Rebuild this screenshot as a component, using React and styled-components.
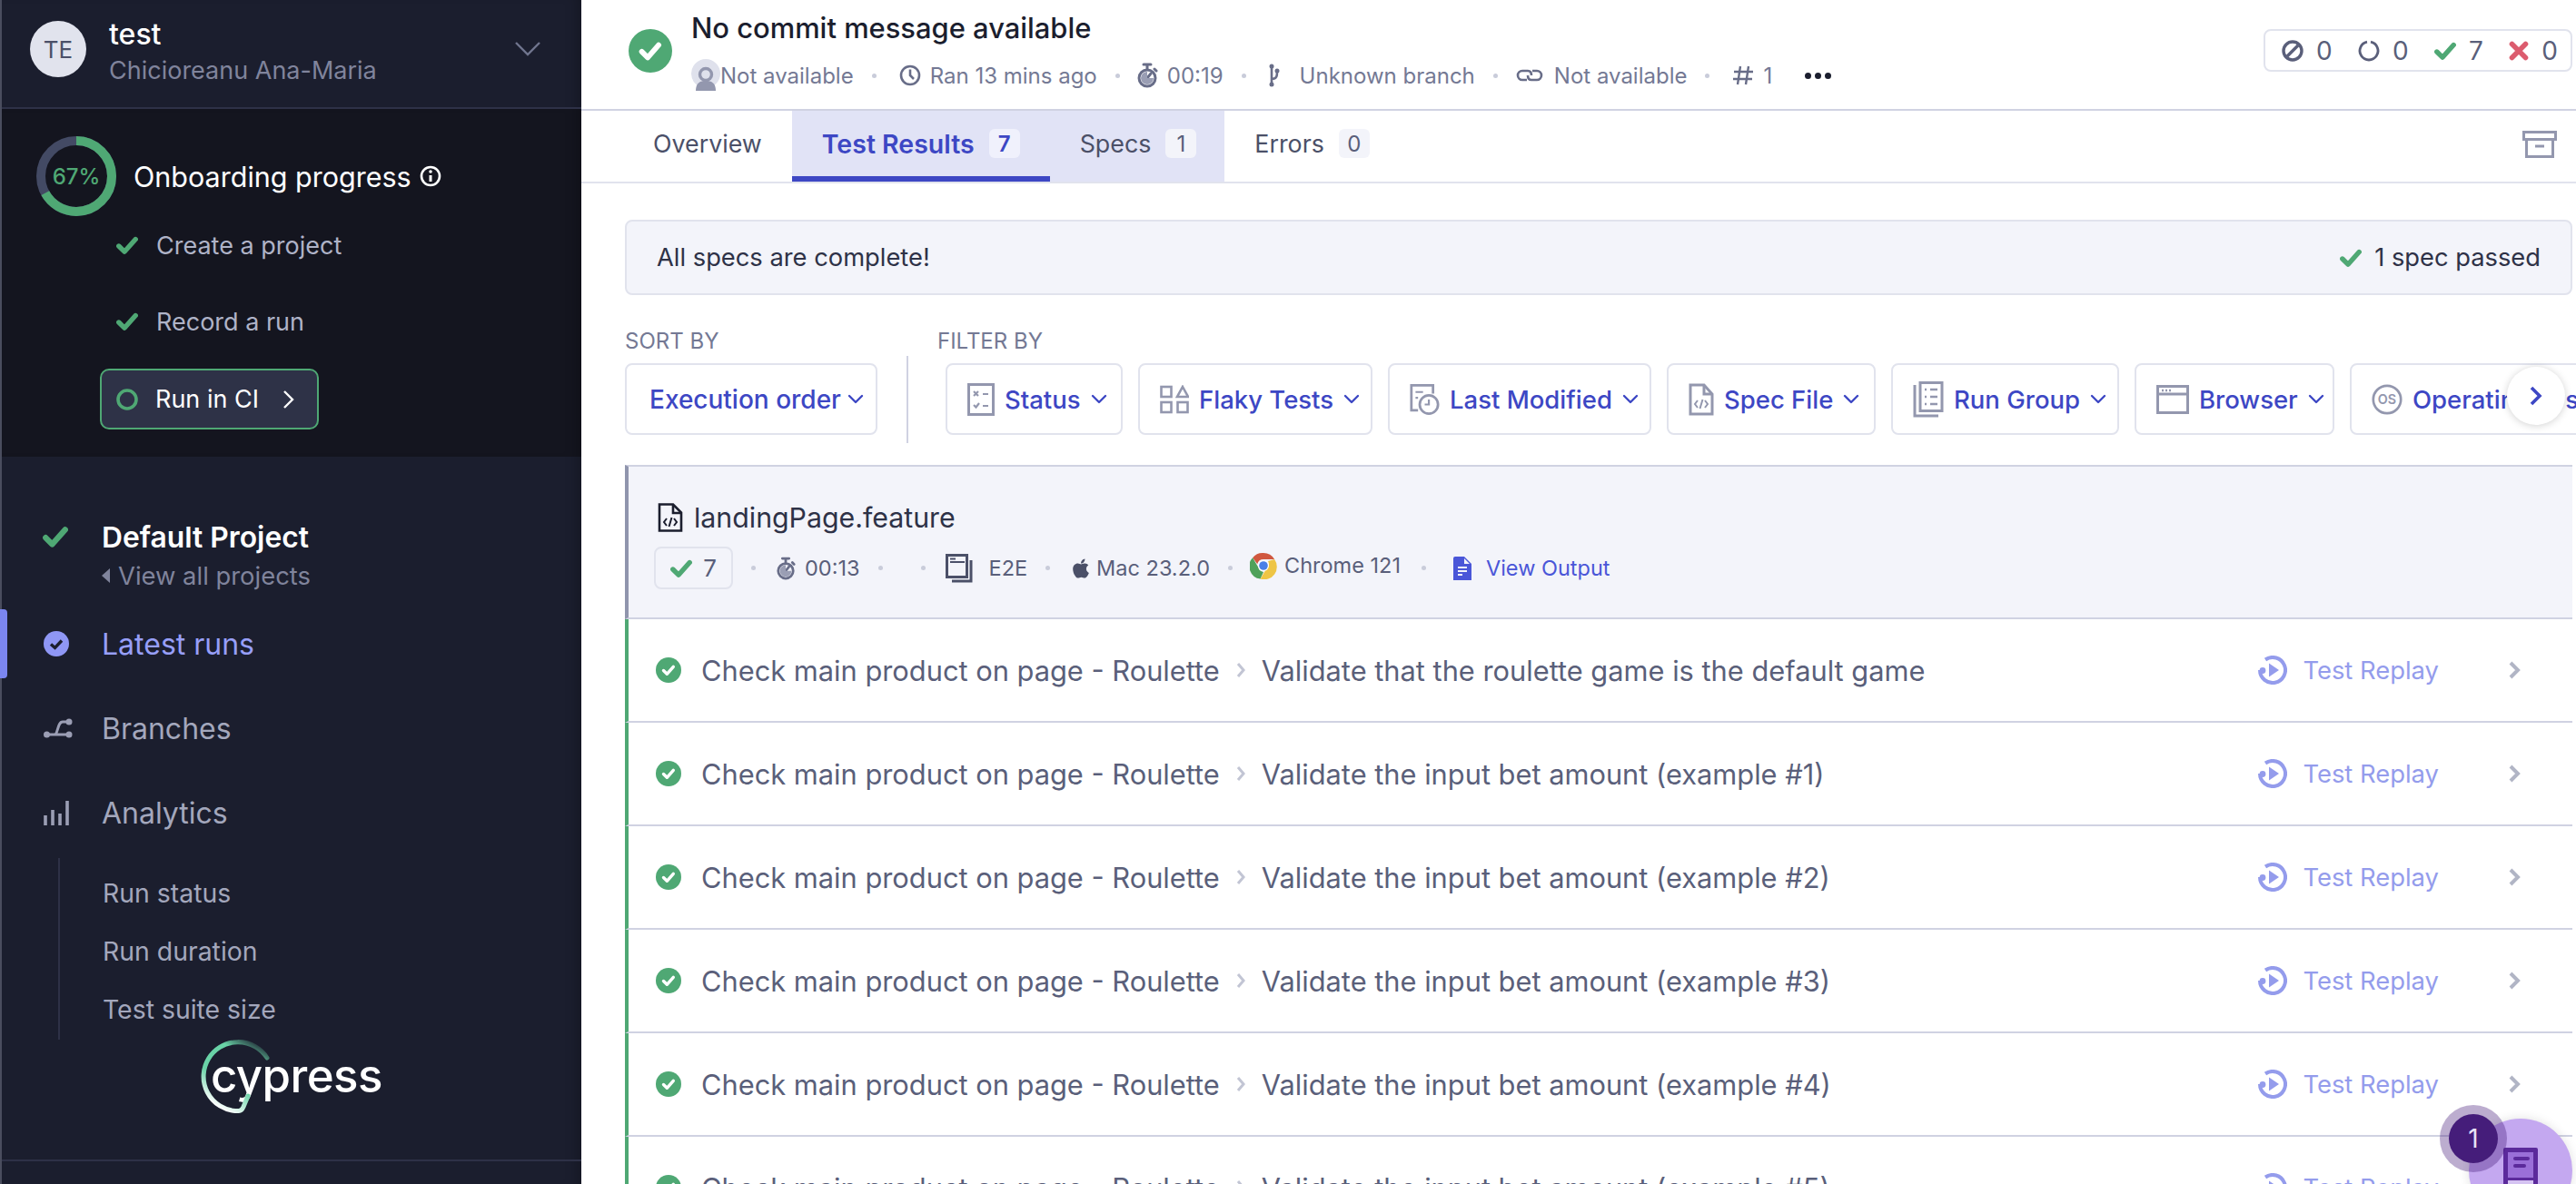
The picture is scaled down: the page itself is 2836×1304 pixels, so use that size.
import React from 'react';
import styled, { createGlobalStyle } from 'styled-components';
import { FaApple } from 'react-icons/fa';

const GlobalStyle = createGlobalStyle`
  html, body {
    margin: 0;
    padding: 0;
    background: #fff;
    overflow: hidden;
  }
  * {
    box-sizing: border-box;
  }
`;

const GREEN = '#4fa874';
const INDIGO = '#3d47c4';

function Check({ size = 24, color = GREEN }) {
  return (
    <svg width={size} height={size} viewBox="0 0 24 24" fill="none">
      <path d="M2.8 13l6.2 6.2L21.2 5.5" stroke={color} strokeWidth="5.4" strokeLinejoin="round" strokeLinecap="round" />
    </svg>
  );
}

function ChevronDown() {
  return (
    <svg width="18" height="12" viewBox="0 0 18 12" fill="none">
      <path d="M2 2l7 7 7-7" stroke={INDIGO} strokeWidth="2.4" strokeLinecap="round" strokeLinejoin="round" />
    </svg>
  );
}

function StatusDot({ size = 28 }) {
  return (
    <svg width={size} height={size} viewBox="0 0 28 28">
      <circle cx="14" cy="14" r="14" fill={GREEN} />
      <path d="M8.5 14.5l3.8 3.8 7-8" stroke="#fff" strokeWidth="3.4" fill="none" strokeLinecap="round" strokeLinejoin="round" />
    </svg>
  );
}

function Stopwatch({ size = 24 }) {
  return (
    <svg width={size} height={size + 4} viewBox="0 0 24 28" fill="none">
      <path d="M8 2h8M12 2v5M20 7l2 2" stroke="#686d88" strokeWidth="3" strokeLinecap="round" />
      <circle cx="12" cy="17" r="9" stroke="#686d88" strokeWidth="3" />
      <path d="M12 17l4-5" stroke="#686d88" strokeWidth="3" strokeLinecap="round" />
      <path d="M12 10a7 7 0 1 0 7 7h-7z" fill="#9a9eb4" />
    </svg>
  );
}

function Replay() {
  return (
    <svg width="32" height="32" viewBox="0 0 32 32" fill="none">
      <path d="M8 4.5A14 14 0 1 1 2 16" stroke="#949cec" strokeWidth="4" />
      <circle cx="5" cy="16.5" r="3.4" fill="#949cec" />
      <path d="M12 8.5l11 7.5-11 7.5z" fill="#949cec" />
    </svg>
  );
}

const stroke = { stroke: '#9397ae', strokeWidth: 3, fill: 'none' };

const filterIcons = {
  status: (
    <svg width="30" height="36" viewBox="0 0 30 36">
      <rect x="1.5" y="1.5" width="27" height="33" {...stroke} />
      <path d="M7 9l5 5M12 9l-5 5M17 12h6M7 24l2.5 2.5L13 22M17 25h6" {...stroke} strokeWidth="2.2" />
    </svg>
  ),
  flaky: (
    <svg width="32" height="32" viewBox="0 0 32 32">
      <rect x="1.5" y="2" width="11" height="11" {...stroke} strokeWidth="2.6" />
      <path d="M25 2l6 11H19z" {...stroke} strokeWidth="2.6" />
      <rect x="1.5" y="19" width="11" height="11" {...stroke} strokeWidth="2.6" />
      <rect x="19.5" y="19" width="11" height="11" {...stroke} strokeWidth="2.6" />
    </svg>
  ),
  modified: (
    <svg width="33" height="38" viewBox="0 0 36 38">
      <path d="M10 32H2V2h26v10" {...stroke} />
      <path d="M7 10h9M7 17h3" {...stroke} strokeWidth="2.4" />
      <circle cx="23" cy="25" r="11" {...stroke} />
      <path d="M23 19v6h-5" {...stroke} strokeWidth="2.4" />
    </svg>
  ),
  spec: (
    <svg width="28" height="36" viewBox="0 0 28 36">
      <path d="M2 2h15l9 10v22H2z" {...stroke} />
      <path d="M17 2v10h9" {...stroke} />
      <path d="M10 19l-3 4 3 4M18 19l3 4-3 4M15.5 18l-3 10" {...stroke} strokeWidth="2" />
    </svg>
  ),
  group: (
    <svg width="34" height="40" viewBox="0 0 34 40">
      <path d="M2 4v34h26" {...stroke} />
      <rect x="8" y="1.5" width="24" height="31" {...stroke} />
      <path d="M13 9h2M19 9h8M13 17h2M19 17h8M13 25h2M19 25h8" {...stroke} strokeWidth="2.4" />
    </svg>
  ),
  browser: (
    <svg width="36" height="32" viewBox="0 0 36 32">
      <rect x="1.5" y="1.5" width="33" height="29" {...stroke} />
      <path d="M2 10h32" {...stroke} />
      <path d="M6 6h2M10 6h2M14 6h2" {...stroke} strokeWidth="2.4" />
    </svg>
  ),
};

const filters = [
  { label: 'Status', icon: filterIcons.status, width: 195 },
  { label: 'Flaky Tests', icon: filterIcons.flaky, width: 258 },
  { label: 'Last Modified', icon: filterIcons.modified, width: 290 },
  { label: 'Spec File', icon: filterIcons.spec, width: 230 },
  { label: 'Run Group', icon: filterIcons.group, width: 251 },
  { label: 'Browser', icon: filterIcons.browser, width: 220 },
];

const rows = [
  'Validate that the roulette game is the default game',
  'Validate the input bet amount (example #1)',
  'Validate the input bet amount (example #2)',
  'Validate the input bet amount (example #3)',
  'Validate the input bet amount (example #4)',
  'Validate the input bet amount (example #5)',
];

export default function App() {
  return (
    <Page>
      <GlobalStyle />
      <Sidebar>
        <OrgHeader>
          <Avatar>TE</Avatar>
          <OrgText>
            <OrgName>test</OrgName>
            <OrgUser>Chicioreanu Ana-Maria</OrgUser>
          </OrgText>
          <OrgCaret width="32" height="20" viewBox="0 0 32 20" fill="none">
            <path d="M3 3l13 13L29 3" stroke="#70758e" strokeWidth="2.4" />
          </OrgCaret>
        </OrgHeader>

        <Onboarding>
          <ProgressRow>
            <Ring>
              <svg width="88" height="88" viewBox="0 0 88 88">
                <circle cx="44" cy="44" r="39" fill="none" stroke="#434a64" strokeWidth="10" />
                <circle
                  cx="44"
                  cy="44"
                  r="39"
                  fill="none"
                  stroke={GREEN}
                  strokeWidth="10"
                  strokeDasharray="164 245"
                  transform="rotate(-90 44 44)"
                />
              </svg>
              <RingLabel>67%</RingLabel>
            </Ring>
            <ProgressTitle>Onboarding progress</ProgressTitle>
            <svg width="24" height="24" viewBox="0 0 24 24" fill="none">
              <circle cx="12" cy="12" r="10" stroke="#fff" strokeWidth="2.6" />
              <path d="M12 11v7" stroke="#fff" strokeWidth="3" />
              <circle cx="12" cy="7" r="1.8" fill="#fff" />
            </svg>
          </ProgressRow>
          <StepRow>
            <Check />
            Create a project
          </StepRow>
          <StepRow>
            <Check />
            Record a run
          </StepRow>
          <RunButton>
            <svg width="24" height="24" viewBox="0 0 24 24" fill="none">
              <circle cx="12" cy="12" r="10" stroke={GREEN} strokeWidth="3.6" />
            </svg>
            <RunLabel>Run in CI</RunLabel>
            <svg width="14" height="22" viewBox="0 0 14 22" fill="none">
              <path d="M2 2l9 9-9 9" stroke="#fff" strokeWidth="2.4" />
            </svg>
          </RunButton>
        </Onboarding>

        <Nav>
          <ProjectRow>
            <ProjectIcon>
              <Check size={28} />
            </ProjectIcon>
            <ProjectName>Default Project</ProjectName>
          </ProjectRow>
          <AllProjects>
            <svg width="10" height="16" viewBox="0 0 10 16">
              <path d="M9 0v16L0 8z" fill="#80849c" />
            </svg>
            View all projects
          </AllProjects>
          <NavList>
            <NavItem $active>
              <NavIcon>
                <svg width="28" height="28" viewBox="0 0 28 28">
                  <circle cx="14" cy="14" r="14" fill="#8f97f5" />
                  <path d="M8 14.5l4.5 4 7.5-8" stroke="#1b1e2e" strokeWidth="3.4" fill="none" />
                </svg>
              </NavIcon>
              Latest runs
            </NavItem>
            <NavItem>
              <NavIcon>
                <svg width="32" height="24" viewBox="0 0 32 24" fill="none">
                  <path d="M4 19h24M12 19c4 0 3-14 9-14h7" stroke="#9b9eb4" strokeWidth="3" />
                  <circle cx="3.5" cy="19" r="3.5" fill="#9b9eb4" />
                  <circle cx="28" cy="19" r="3.5" fill="#9b9eb4" />
                  <circle cx="28" cy="5" r="3.5" fill="#9b9eb4" />
                </svg>
              </NavIcon>
              Branches
            </NavItem>
            <NavItem>
              <NavIcon>
                <svg width="28" height="28" viewBox="0 0 28 28">
                  <path d="M2 28V17M10 28V11M18 28V15M26 28V1" stroke="#9b9eb4" strokeWidth="3.6" />
                </svg>
              </NavIcon>
              Analytics
            </NavItem>
          </NavList>
          <SubList>
            <SubItem>Run status</SubItem>
            <SubItem>Run duration</SubItem>
            <SubItem>Test suite size</SubItem>
          </SubList>
          <Logo>
            <LogoRing width="84" height="84" viewBox="0 0 84 84" fill="none">
              <defs>
                <linearGradient id="logoGrad" x1="76" y1="8" x2="34" y2="82" gradientUnits="userSpaceOnUse">
                  <stop offset="0" stopColor="#69d3a7" stopOpacity="0" />
                  <stop offset="0.25" stopColor="#69d3a7" />
                  <stop offset="0.65" stopColor="#69d3a7" />
                  <stop offset="1" stopColor="#ffffff" />
                </linearGradient>
              </defs>
              <path
                d="M74 20A38 38 0 1 0 39 78.5L43 78.5Q46 78.5 48 74L53 62"
                stroke="url(#logoGrad)"
                strokeWidth="5"
                strokeLinecap="round"
              />
            </LogoRing>
            <LogoText>cypress</LogoText>
          </Logo>
          <NavFooter />
        </Nav>
      </Sidebar>

      <Main>
        <RunHeader>
          <StatusDot size={48} />
          <RunInfo>
            <RunTitle>No commit message available</RunTitle>
            <RunMeta>
              <MetaItem $gap={0}>
                <svg width="32" height="36" viewBox="0 0 32 36">
                  <circle cx="16" cy="16" r="16" fill="#dfe1ec" />
                  <circle cx="16" cy="17" r="6.5" fill="none" stroke="#9397ae" strokeWidth="3.4" />
                  <path d="M5 35c0-9 5-11 11-11s11 2 11 11z" fill="#9397ae" />
                </svg>
                Not available
              </MetaItem>
              <Dot />
              <MetaItem>
                <svg width="24" height="24" viewBox="0 0 24 24" fill="none">
                  <circle cx="12" cy="12" r="10" stroke="#686d88" strokeWidth="2.6" />
                  <path d="M12 5.5V12l4 4" stroke="#686d88" strokeWidth="2.6" />
                </svg>
                Ran 13 mins ago
              </MetaItem>
              <Dot $tight />
              <MetaItem>
                <Stopwatch />
                00:19
              </MetaItem>
              <Dot />
              <MetaItem $gap={22}>
                <svg width="12" height="26" viewBox="0 0 12 26" fill="none">
                  <path d="M3 3v20M3 17c6 0 6-4 6-8" stroke="#686d88" strokeWidth="2.6" />
                  <circle cx="3" cy="3" r="2.5" fill="#686d88" />
                  <circle cx="3" cy="23" r="2.5" fill="#686d88" />
                  <circle cx="9" cy="8" r="2.5" fill="#686d88" />
                </svg>
                Unknown branch
              </MetaItem>
              <Dot $tight />
              <MetaItem>
                <svg width="34" height="18" viewBox="0 0 34 18" fill="none">
                  <path d="M14 14H9A5 5 0 0 1 9 4h6c3 0 4 2 4 5M20 4h5a5 5 0 0 1 0 10h-6c-3 0-4-2-4-5" stroke="#686d88" strokeWidth="2.6" />
                </svg>
                Not available
              </MetaItem>
              <Dot />
              <MetaItem>
                <svg width="24" height="24" viewBox="0 0 24 24" fill="none">
                  <path d="M9 2L6 22M18 2l-3 20M2 8h21M1 16h21" stroke="#686d88" strokeWidth="2.4" />
                </svg>
                1
              </MetaItem>
              <MoreDots>
                <span />
                <span />
                <span />
              </MoreDots>
            </RunMeta>
          </RunInfo>
          <StatsBox>
            <Stat>
              <svg width="24" height="24" viewBox="0 0 24 24" fill="none">
                <circle cx="12" cy="12" r="10" stroke="#5a5f7a" strokeWidth="3.4" />
                <path d="M6 18L18 6" stroke="#5a5f7a" strokeWidth="3.4" />
              </svg>
              0
            </Stat>
            <Stat>
              <svg width="24" height="24" viewBox="0 0 24 24" fill="none">
                <path d="M10 2.2A10 10 0 1 0 14 2.2" stroke="#5a5f7a" strokeWidth="2.8" />
              </svg>
              0
            </Stat>
            <Stat>
              <Check />
              7
            </Stat>
            <Stat>
              <svg width="22" height="24" viewBox="0 0 22 24" fill="none">
                <path d="M3.5 4.5l15 15M18.5 4.5l-15 15" stroke="#dc5c6e" strokeWidth="5.6" strokeLinecap="round" />
              </svg>
              0
            </Stat>
          </StatsBox>
        </RunHeader>

        <TabBar>
          <Tab>Overview</Tab>
          <Tab $active>
            Test Results <TabCount $active>7</TabCount>
          </Tab>
          <Tab $hover>
            Specs <TabCount>1</TabCount>
          </Tab>
          <Tab>
            Errors <TabCount>0</TabCount>
          </Tab>
          <ArchiveIcon width="38" height="30" viewBox="0 0 38 30" fill="none">
            <rect x="1.5" y="1.5" width="35" height="8" stroke="#9397ae" strokeWidth="3" />
            <path d="M4.5 9v19.5h29V9M14 17h10" stroke="#9397ae" strokeWidth="3" />
          </ArchiveIcon>
        </TabBar>

        <Content>
          <Banner>
            All specs are complete!
            <BannerResult>
              <Check />1 spec passed
            </BannerResult>
          </Banner>

          <Controls>
            <SortGroup>
              <ControlLabel>SORT BY</ControlLabel>
              <SortButton>
                Execution order <ChevronDown />
              </SortButton>
            </SortGroup>
            <ControlDivider />
            <FilterGroup>
              <ControlLabel>FILTER BY</ControlLabel>
              <FilterRow>
                {filters.map((f) => (
                  <FilterButton key={f.label} $width={f.width}>
                    {f.icon}
                    {f.label}
                    <ChevronDown />
                  </FilterButton>
                ))}
                <FilterButton $width={340}>
                  <svg width="34" height="38" viewBox="0 0 38 38">
                    <circle cx="19" cy="19" r="17" {...stroke} />
                    <text x="19" y="25" textAnchor="middle" fontFamily="Inter, sans-serif" fontSize="16" fontWeight="600" fill="#9397ae">
                      OS
                    </text>
                  </svg>
                  Operating system
                </FilterButton>
              </FilterRow>
              <ScrollButton>
                <svg width="16" height="24" viewBox="0 0 16 24" fill="none">
                  <path d="M3 3l9 9-9 9" stroke={INDIGO} strokeWidth="3.6" />
                </svg>
              </ScrollButton>
            </FilterGroup>
          </Controls>

          <SpecHeader>
            <SpecName>
              <svg width="28" height="32" viewBox="0 0 28 32" fill="none">
                <path d="M2 1.5h15l9 9v20H2z" stroke="#1b1e2e" strokeWidth="2.6" />
                <path d="M17 2v9h9" stroke="#1b1e2e" strokeWidth="2.6" />
                <path d="M10 17l-3 4 3 4M18 17l3 4-3 4M15.5 16l-3 10" stroke="#1b1e2e" strokeWidth="2" />
              </svg>
              landingPage.feature
            </SpecName>
            <SpecMeta>
              <PassBox>
                <Check />7
              </PassBox>
              <Dot />
              <MetaItem>
                <Stopwatch size={22} />
                00:13
              </MetaItem>
              <Dot />
              <Dot />
              <MetaItem $gap={18}>
                <svg width="30" height="32" viewBox="0 0 30 32" fill="none">
                  <rect x="1.5" y="1.5" width="22" height="24" stroke="#4b5068" strokeWidth="3" />
                  <path d="M5 9h16M5 5.5h6" stroke="#4b5068" strokeWidth="2" />
                  <path d="M28 7v23H7" stroke="#4b5068" strokeWidth="3" />
                </svg>
                E2E
              </MetaItem>
              <Dot />
              <MetaItem $gap={5}>
                <FaApple size={24} color="#4b5068" />
                Mac 23.2.0
              </MetaItem>
              <Dot />
              <ChromeItem>
                <svg width="30" height="30" viewBox="0 0 30 30">
                  <path d="M15 1a14 14 0 0 1 12.1 7H15a7 7 0 0 0-6.8 5.2L3.1 6.2A14 14 0 0 1 15 1z" fill="#d0573f" />
                  <path d="M3.1 6.2l6 10.4A7 7 0 0 0 15 22l-3.4 7.6A14 14 0 0 1 3.1 6.2z" fill="#4fa15a" />
                  <path d="M27.1 8A14 14 0 0 1 11.6 29.6L17.5 19.6A7 7 0 0 0 20 10z" fill="#eec545" />
                  <circle cx="15" cy="15" r="6" fill="#fff" />
                  <circle cx="15" cy="15" r="4.8" fill="#4a80e8" />
                </svg>
                Chrome 121
              </ChromeItem>
              <Dot />
              <OutputLink>
                <svg width="20" height="26" viewBox="0 0 20 26">
                  <path d="M2 0h10l8 8v18H0V2a2 2 0 0 1 2-2z" fill="#4a56d8" />
                  <path d="M5 12h10M5 16h10M5 20h5" stroke="#f3f4fa" strokeWidth="2" />
                  <path d="M12 2v6h6" fill="#f3f4fa" />
                </svg>
                View Output
              </OutputLink>
            </SpecMeta>
          </SpecHeader>

          {rows.map((name) => (
            <TestRow key={name}>
              <StatusDot />
              <TestPath>
                Check main product on page - Roulette
                <svg width="12" height="20" viewBox="0 0 12 20" fill="none">
                  <path d="M3 3l6 7-6 7" stroke="#c2c5d4" strokeWidth="3" />
                </svg>
                {name}
              </TestPath>
              <ReplayLink>
                <Replay />
                Test Replay
              </ReplayLink>
              <RowChevron width="14" height="22" viewBox="0 0 14 22" fill="none">
                <path d="M3 3l8 8-8 8" stroke="#b1b5c5" strokeWidth="4" />
              </RowChevron>
            </TestRow>
          ))}
        </Content>

        <Bubble>
          <svg width="38" height="60" viewBox="0 0 38 60">
            <rect width="38" height="60" rx="2" fill="#5b2a9b" />
            <rect x="5" y="5" width="28" height="28" fill="#9a6fd8" />
            <rect x="11" y="10" width="18" height="4" rx="2" fill="#5b2a9b" />
            <rect x="11" y="18" width="14" height="4" rx="2" fill="#5b2a9b" />
            <rect x="5" y="36" width="28" height="5" fill="#d5c3f2" />
          </svg>
          <BubbleCount>1</BubbleCount>
        </Bubble>
      </Main>
    </Page>
  );
}

const Page = styled.div`
  display: flex;
  width: 2836px;
  height: 1304px;
  overflow: hidden;
  font-family: Inter, 'Liberation Sans', sans-serif;
  position: relative;
`;

const Sidebar = styled.aside`
  width: 640px;
  flex-shrink: 0;
  background: #1b1e2e;
  border-left: 2px solid #4a4d5e;
  box-shadow: inset -14px 0 14px -10px rgba(0, 0, 0, 0.25);
  display: flex;
  flex-direction: column;
`;

const OrgHeader = styled.div`
  height: 120px;
  flex-shrink: 0;
  border-bottom: 2px solid #2e3147;
  display: flex;
  align-items: center;
  padding: 0 43px 10px 31px;
`;

const Avatar = styled.div`
  width: 62px;
  height: 62px;
  border-radius: 50%;
  background: #e1e3ed;
  color: #4b5068;
  display: flex;
  align-items: center;
  justify-content: center;
  font-size: 26px;
  flex-shrink: 0;
`;

const OrgText = styled.div`
  margin: 8px 0 0 25px;
  flex: 1;
`;

const OrgName = styled.div`
  color: #fff;
  font-size: 32px;
  font-weight: 500;
  line-height: 36px;
`;

const OrgUser = styled.div`
  color: #80849c;
  font-size: 27px;
  line-height: 36px;
  margin-top: 4px;
`;

const OrgCaret = styled.svg`
  display: block;
`;

const Onboarding = styled.section`
  height: 383px;
  flex-shrink: 0;
  background: #14151f;
  padding: 30px 0 0 38px;
  box-shadow: inset -14px 0 14px -10px rgba(0, 0, 0, 0.25);
`;

const ProgressRow = styled.div`
  display: flex;
  align-items: center;
  color: #fff;
`;

const Ring = styled.div`
  width: 88px;
  height: 88px;
  position: relative;
  margin-right: 19px;

  svg {
    display: block;
  }
`;

const RingLabel = styled.div`
  position: absolute;
  inset: 0;
  display: flex;
  align-items: center;
  justify-content: center;
  color: ${GREEN};
  font-size: 24px;
  font-weight: 500;
`;

const ProgressTitle = styled.div`
  font-size: 30.5px;
  margin-right: 9px;
`;

const StepRow = styled.div`
  height: 36px;
  margin: 14px 0 0 88px;
  display: flex;
  align-items: center;
  gap: 20px;
  color: #afb3c7;
  font-size: 27px;

  & + & {
    margin-top: 48px;
  }
`;

const RunButton = styled.div`
  width: 241px;
  height: 67px;
  margin: 34px 0 0 70px;
  padding: 0 24px 0 16px;
  border: 2px solid ${GREEN};
  border-radius: 10px;
  background: #2e3247;
  display: flex;
  align-items: center;
  color: #fff;
  font-size: 27px;
`;

const RunLabel = styled.span`
  margin: 0 auto 0 19px;
`;

const Nav = styled.nav`
  flex: 1;
  display: flex;
  flex-direction: column;
  position: relative;
`;

const ProjectRow = styled.div`
  height: 40px;
  margin-top: 68px;
  display: flex;
  align-items: center;
  color: #fff;
`;

const ProjectIcon = styled.div`
  width: 110px;
  padding-left: 45px;
  display: flex;
`;

const ProjectName = styled.div`
  font-size: 31.8px;
  font-weight: 600;
`;

const AllProjects = styled.div`
  height: 30px;
  margin: 8px 0 0 110px;
  display: flex;
  align-items: center;
  gap: 8px;
  color: #80849c;
  font-size: 27.4px;
`;

const NavList = styled.div`
  display: flex;
  flex-direction: column;
  gap: 17px;
  margin-top: 22px;
`;

const NavItem = styled.div`
  height: 76px;
  display: flex;
  align-items: center;
  color: ${(p) => (p.$active ? '#979ff8' : '#a3a7bc')};
  font-size: 32px;
  position: relative;
  margin-left: -2px;

  &::before {
    content: '';
    display: ${(p) => (p.$active ? 'block' : 'none')};
    position: absolute;
    left: 0;
    top: 0;
    bottom: 0;
    width: 8px;
    background: #7b86f0;
    border-radius: 0 4px 4px 0;
  }
`;

const NavIcon = styled.div`
  width: 112px;
  padding-left: 48px;
  display: flex;
`;

const SubList = styled.div`
  height: 200px;
  margin: 12px 0 0 62px;
  padding: 6px 0 0 47px;
  border-left: 2px solid #2e3147;
`;

const SubItem = styled.div`
  height: 64px;
  display: flex;
  align-items: center;
  color: #a3a7bc;
  font-size: 28.4px;
`;

const Logo = styled.div`
  height: 84px;
  margin-left: 218px;
  padding-left: 12px;
  position: relative;
`;

const LogoRing = styled.svg`
  position: absolute;
  left: 0;
  top: 0;
`;

const LogoText = styled.div`
  color: #fff;
  font-size: 51px;
  font-weight: 500;
  line-height: 80px;
  letter-spacing: -0.6px;
`;

const NavFooter = styled.div`
  margin-top: auto;
  height: 27px;
  border-top: 2px solid #2e3147;
`;

const Main = styled.main`
  flex: 1;
  min-width: 0;
  position: relative;
  display: flex;
  flex-direction: column;
`;

const RunHeader = styled.header`
  height: 122px;
  flex-shrink: 0;
  border-bottom: 2px solid #d0d2e2;
  display: flex;
  align-items: flex-start;
  padding: 32px 4px 0 52px;
`;

const RunInfo = styled.div`
  margin: -21px 0 0 21px;
  flex: 1;
`;

const RunTitle = styled.div`
  color: #1b1e2e;
  font-size: 30.9px;
  font-weight: 500;
  line-height: 40px;
`;

const RunMeta = styled.div`
  margin-top: 14px;
  height: 36px;
  display: flex;
  align-items: center;
  color: #747994;
  font-size: 24px;
`;

const MetaItem = styled.div`
  display: flex;
  align-items: center;
  gap: ${(p) => (p.$gap !== undefined ? p.$gap : 10)}px;
  white-space: nowrap;
`;

const Dot = styled.span`
  width: 5px;
  height: 5px;
  border-radius: 50%;
  background: #c9ccda;
  margin: 0 ${(p) => (p.$tight ? 18 : 25)}px 0 20px;
  flex-shrink: 0;
`;

const MoreDots = styled.div`
  display: flex;
  gap: 4px;
  margin-left: 36px;

  span {
    width: 7px;
    height: 7px;
    border-radius: 50%;
    background: #1b1e2e;
  }
`;

const StatsBox = styled.div`
  width: 340px;
  height: 47px;
  border: 2px solid #e1e3ed;
  border-radius: 8px;
  display: flex;
  align-items: center;
  justify-content: space-between;
  padding: 0 14px 0 18px;
`;

const Stat = styled.div`
  display: flex;
  align-items: center;
  gap: 14px;
  color: #5a5f7a;
  font-size: 28px;
`;

const TabBar = styled.nav`
  height: 80px;
  flex-shrink: 0;
  border-bottom: 2px solid #e1e3ed;
  display: flex;
  padding: 0 21px 0 46px;
`;

const Tab = styled.div`
  display: flex;
  align-items: center;
  gap: 16px;
  padding: 0 ${(p) => (p.$hover ? 31 : 33)}px 0 33px;
  font-size: ${(p) => (p.$active ? 28.5 : 26.8)}px;
  color: ${(p) => (p.$active ? INDIGO : '#4b5068')};
  font-weight: ${(p) => (p.$active ? 600 : 400)};
  background: ${(p) => (p.$active || p.$hover ? '#e1e3f6' : 'transparent')};
  border-bottom: 6px solid ${(p) => (p.$active ? INDIGO : 'transparent')};
`;

const TabCount = styled.span`
  min-width: 34px;
  height: 32px;
  border-radius: 6px;
  background: ${(p) => (p.$active ? '#f0f1fc' : '#f3f4fa')};
  color: ${(p) => (p.$active ? INDIGO : '#5a5f7a')};
  display: flex;
  align-items: center;
  justify-content: center;
  font-size: 24px;
`;

const ArchiveIcon = styled.svg`
  margin: 22px 0 0 auto;
`;

const Content = styled.div`
  padding: 40px 4px 0 48px;
  flex: 1;
`;

const Banner = styled.div`
  height: 83px;
  background: #f3f4fa;
  border: 2px solid #e1e3ed;
  border-radius: 8px;
  padding: 0 33px;
  display: flex;
  align-items: center;
  justify-content: space-between;
  color: #2e3247;
  font-size: 27.3px;
`;

const BannerResult = styled.div`
  display: flex;
  align-items: center;
  gap: 14px;
`;

const Controls = styled.div`
  margin-top: 39px;
  display: flex;
  align-items: flex-start;
`;

const SortGroup = styled.div`
  flex-shrink: 0;
`;

const ControlLabel = styled.div`
  color: #747994;
  font-size: 24px;
  line-height: 24px;
  margin-bottom: 12px;
`;

const SortButton = styled.div`
  width: 278px;
  height: 79px;
  padding-left: 25px;
  border: 2px solid #e1e3ed;
  border-radius: 8px;
  display: flex;
  align-items: center;
  gap: 7px;
  color: ${INDIGO};
  font-size: 28px;
  font-weight: 500;
`;

const ControlDivider = styled.div`
  width: 2px;
  height: 96px;
  margin: 28px 32px 0 32px;
  background: #d0d2e2;
  flex-shrink: 0;
`;

const FilterGroup = styled.div`
  flex: 1;
  min-width: 0;
  position: relative;
  margin-right: -4px;
`;

const FilterRow = styled.div`
  display: flex;
  gap: 17px;
  margin-left: 9px;
  overflow: hidden;
`;

const FilterButton = styled.div`
  width: ${(p) => p.$width}px;
  height: 79px;
  flex-shrink: 0;
  padding-left: 22px;
  border: 2px solid #e1e3ed;
  border-radius: 8px;
  display: flex;
  align-items: center;
  gap: 11px;
  color: ${INDIGO};
  font-size: 27.5px;
  font-weight: 500;
  white-space: nowrap;
`;

const ScrollButton = styled.div`
  position: absolute;
  right: 12px;
  top: 40px;
  width: 64px;
  height: 64px;
  border-radius: 50%;
  background: #fff;
  box-shadow: 0 1px 8px rgba(0, 0, 0, 0.18);
  display: flex;
  align-items: center;
  justify-content: center;
`;

const SpecHeader = styled.div`
  height: 170px;
  margin-top: 24px;
  padding: 38px 0 0 32px;
  background: #f3f4fa;
  border-top: 2px solid #d0d2e2;
  border-bottom: 2px solid #d0d2e2;
  border-left: 4px solid #9095ad;
`;

const SpecName = styled.div`
  display: flex;
  align-items: center;
  gap: 12px;
  color: #2e3247;
  font-size: 30.3px;
  line-height: 36px;
`;

const SpecMeta = styled.div`
  display: flex;
  align-items: center;
  margin: 14px 0 0 -4px;
  color: #5a5f7a;
  font-size: 23.5px;

  ${Dot} {
    margin: 0 22px 0 20px;
  }
`;

const PassBox = styled.div`
  width: 87px;
  height: 47px;
  border: 2px solid #e1e3ed;
  border-radius: 8px;
  display: flex;
  align-items: center;
  justify-content: center;
  gap: 12px;
  font-size: 26px;
`;

const ChromeItem = styled(MetaItem)`
  gap: 8px;
  margin: 0 3px 0 -3px;
  transform: translateY(-3px);
`;

const OutputLink = styled(MetaItem)`
  gap: 16px;
  color: #4a56d8;
  margin-left: 8px;
`;

const TestRow = styled.div`
  height: 114px;
  display: flex;
  align-items: center;
  padding: 0 57px 0 30px;
  border-left: 4px solid ${GREEN};
  border-bottom: 2px solid #d0d2e2;
`;

const TestPath = styled.div`
  margin-left: 22px;
  display: flex;
  align-items: center;
  gap: 17px;
  color: #5a5f7a;
  font-size: 30.8px;
`;

const ReplayLink = styled.div`
  margin-left: auto;
  display: flex;
  align-items: center;
  gap: 17px;
  color: #949cec;
  font-size: 27.4px;
`;

const RowChevron = styled.svg`
  margin-left: 76px;
`;

const Bubble = styled.div`
  position: absolute;
  left: 2078px;
  top: 1232px;
  width: 114px;
  height: 114px;
  border-radius: 50%;
  background: #c4a8f0;
  box-shadow: 0 0 12px rgba(0, 0, 0, 0.12);
  display: flex;
  justify-content: center;
  padding-top: 32px;
`;

const BubbleCount = styled.div`
  position: absolute;
  left: -22px;
  top: -5px;
  width: 54px;
  height: 54px;
  border-radius: 50%;
  background: #451d7a;
  box-shadow: 0 0 0 10px rgba(69, 29, 122, 0.36);
  color: #e9e2f5;
  display: flex;
  align-items: center;
  justify-content: center;
  font-size: 28px;
`;
